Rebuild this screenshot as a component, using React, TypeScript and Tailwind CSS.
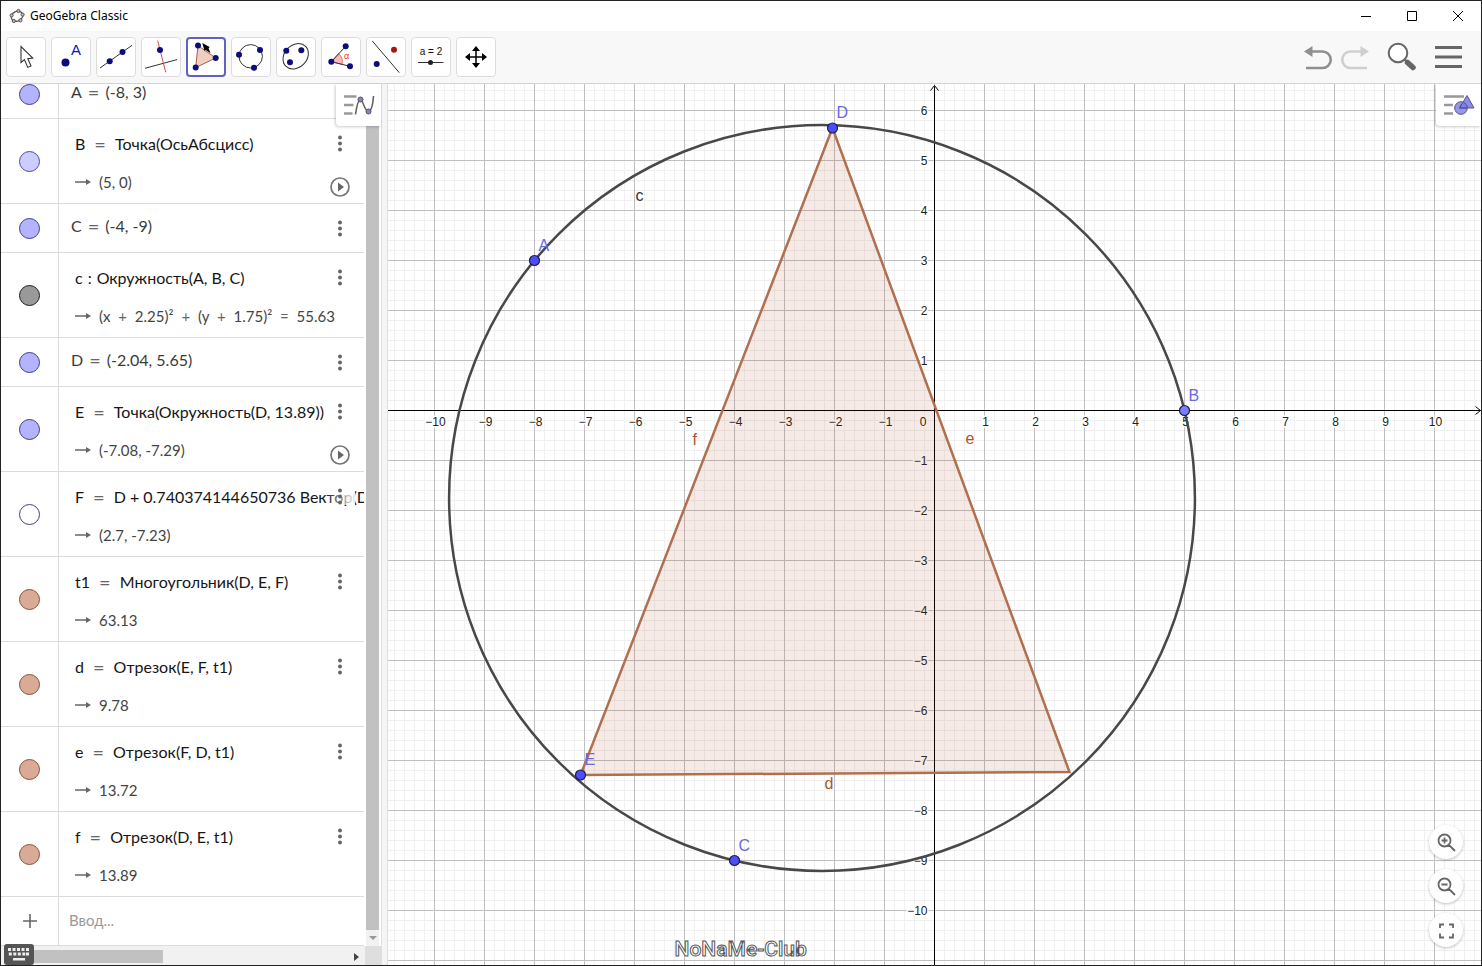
import { ReactNode } from 'react';

type Row = {
  name: string;
  sign?: string;
  value: string;
  result?: string;
  fill: string;
  stroke: string;
  play?: boolean;
};

const blue = { fill: '#b3b3ff', stroke: '#3d3d8f' };
const brown = { fill: '#d9ab97', stroke: '#8a5237' };

const rows: Row[] = [
  { name: 'A', value: '(-8, 3)', ...blue },
  { name: 'B', value: 'Точка(ОсьАбсцисс)', result: '(5, 0)', fill: '#ccccff', stroke: '#4c4ca0', play: true },
  { name: 'C', value: '(-4, -9)', ...blue },
  { name: 'c', sign: ':', value: 'Окружность(A, B, C)', result: '(x + 2.25)² + (y + 1.75)² = 55.63', fill: '#999999', stroke: '#1c1c1c' },
  { name: 'D', value: '(-2.04, 5.65)', ...blue },
  { name: 'E', value: 'Точка(Окружность(D, 13.89))', result: '(-7.08, -7.29)', ...blue, play: true },
  { name: 'F', value: 'D + 0.740374144650736 Вектор(D', result: '(2.7, -7.23)', fill: '#ffffff', stroke: '#3d3d8f' },
  { name: 't1', value: 'Многоугольник(D, E, F)', result: '63.13', ...brown },
  { name: 'd', value: 'Отрезок(E, F, t1)', result: '9.78', ...brown },
  { name: 'e', value: 'Отрезок(F, D, t1)', result: '13.72', ...brown },
  { name: 'f', value: 'Отрезок(D, E, t1)', result: '13.89', ...brown },
];

const Dot = ({ x, y, color = '#0c0c7c' }: { x: number; y: number; color?: string }) => (
  <circle cx={x} cy={y} r="3" fill={color} />
);

const tools: { label: string; icon: ReactNode }[] = [
  {
    label: 'Перемещать',
    icon: <path d="M15 9.5 15 25.5 18.4 22.6 21.8 30.4 25 29 21.8 21.6 26.8 21Z" fill="#fff" stroke="#333" strokeWidth="1.1" />,
  },
  {
    label: 'Точка',
    icon: (
      <>
        <circle cx="14.5" cy="25.5" r="4" fill="#0c0c7c" />
        <text x="20" y="18" fontSize="15" fill="#1515b0">A</text>
      </>
    ),
  },
  {
    label: 'Прямая',
    icon: (
      <>
        <path d="M4 31 36 8.3" stroke="#333" />
        <Dot x={13.7} y={24.3} />
        <Dot x={26.5} y={15} />
      </>
    ),
  },
  {
    label: 'Перпендикулярная прямая',
    icon: (
      <>
        <path d="M4 31.3 36 22.6" stroke="#333" />
        <path d="M16.7 3.6 24.7 35.3" stroke="#e04848" />
        <Dot x={19} y={13} />
      </>
    ),
  },
  {
    label: 'Многоугольник',
    icon: (
      <>
        <path d="M12 8.6 29.7 21 9.7 30.6Z" fill="#f0cfc2" stroke="#a3604a" />
        <path d="M16.3 6 23.6 10 22.6 11.6 24.6 16.2 19.4 12.8 18.6 14.2Z" fill="#000" />
        <Dot x={12} y={8.6} />
        <Dot x={29.7} y={21} />
        <Dot x={9.7} y={30.6} />
      </>
    ),
  },
  {
    label: 'Окружность по трём точкам',
    icon: (
      <>
        <circle cx="19.7" cy="19.3" r="11.7" fill="none" stroke="#333" />
        <Dot x={8} y={17.7} />
        <Dot x={29} y={13} />
        <Dot x={23} y={30.7} />
      </>
    ),
  },
  {
    label: 'Эллипс',
    icon: (
      <>
        <ellipse cx="19.7" cy="19.3" rx="14" ry="11.2" transform="rotate(-45 19.7 19.3)" fill="none" stroke="#333" />
        <Dot x={10.3} y={13.7} />
        <Dot x={25.3} y={13.3} />
        <Dot x={14} y={25.3} />
      </>
    ),
  },
  {
    label: 'Угол',
    icon: (
      <>
        <path d="M10.3 24.7 17.6 16.6A11 11 0 0 1 21 27.4Z" fill="#fbb8b8" stroke="#e87070" />
        <path d="M24.7 9.3 10.3 24.7 29 29.3" fill="none" stroke="#333" />
        <text x="23" y="22" fontSize="9" fill="#d33">α</text>
        <Dot x={10.3} y={24.7} />
        <Dot x={24.7} y={9.3} />
        <Dot x={29} y={29.3} />
      </>
    ),
  },
  {
    label: 'Отражение относительно прямой',
    icon: (
      <>
        <path d="M6.3 4 33.3 35.7" stroke="#333" />
        <Dot x={10.7} y={27} />
        <Dot x={28} y={12.7} color="#a01818" />
      </>
    ),
  },
  {
    label: 'Ползунок',
    icon: (
      <>
        <text x="20" y="18" fontSize="10" textAnchor="middle" fill="#111">a = 2</text>
        <path d="M7 25.5H32.5" stroke="#333" />
        <circle cx="19.5" cy="25.5" r="2.5" fill="#222" />
      </>
    ),
  },
  {
    label: 'Переместить чертёж',
    icon: (
      <>
        <path d="M20 12V28M12 20H28" stroke="#000" strokeWidth="1.5" />
        <path d="M20 9 24 14H16ZM20 31 16 26H24ZM9 20 14 16V24ZM31 20 26 24V16Z" fill="#000" />
      </>
    ),
  },
];

const TitleBar = () => (
  <div className="flex h-[30px] shrink-0 items-center justify-between bg-white">
    <div className="flex items-center gap-[5px] pl-2">
      <svg width="16" height="16" viewBox="0 0 16 16" fill="none" stroke="#555">
        <ellipse cx="8" cy="8.2" rx="6" ry="4.8" transform="rotate(-25 8 8.2)" strokeWidth="1.3" />
        <g fill="#bbb">
          <circle cx="9.4" cy="3" r="1.6" />
          <circle cx="13.6" cy="6.6" r="1.6" />
          <circle cx="11.4" cy="12.4" r="1.6" />
          <circle cx="4.8" cy="13" r="1.6" />
          <circle cx="2.6" cy="7.4" r="1.6" />
        </g>
      </svg>
      <h1 className="font-['Noto_Sans',sans-serif] text-[12px] leading-4 text-black">GeoGebra Classic</h1>
    </div>
    <div className="flex">
      <button aria-label="Свернуть" className="flex h-7 w-[46px] items-center justify-center">
        <svg width="10" height="10" viewBox="0 0 10 10"><path d="M0 5.5H10" stroke="#000" /></svg>
      </button>
      <button aria-label="Развернуть" className="flex h-7 w-[46px] items-center justify-center">
        <svg width="10" height="10" viewBox="0 0 10 10"><path d="M.5.5H9.5V9.5H.5Z" fill="none" stroke="#000" /></svg>
      </button>
      <button aria-label="Закрыть" className="flex h-7 w-[46px] items-center justify-center">
        <svg width="10" height="10" viewBox="0 0 10 10"><path d="M0 0 10 10M10 0 0 10" stroke="#000" /></svg>
      </button>
    </div>
  </div>
);

const Toolbar = () => (
  <div className="flex h-[53px] shrink-0 items-center justify-between border-b border-[#d4d4d4] bg-[#f8f8f8] pr-[18px] pl-[5px]">
    <div className="flex gap-[5px]">
      {tools.map((tool, i) => (
        <button
          key={tool.label}
          aria-label={tool.label}
          className={i === 4
            ? 'size-10 rounded-[4px] bg-white outline-2 -outline-offset-2 outline-[#6161c0]'
            : 'size-10 rounded-[4px] bg-white outline-1 -outline-offset-1 outline-[#dcdcdc]'}
        >
          <svg width="40" height="40" viewBox="0 0 40 40" className="font-['Liberation_Sans',sans-serif]">{tool.icon}</svg>
        </button>
      ))}
    </div>
    <div className="flex items-center">
      <button aria-label="Отменить" className="mr-[7px]">
        <svg width="30" height="30" viewBox="0 0 30 30">
          <path d="M7 9.5H19.5A8.2 8.2 0 0 1 19.5 26H3" fill="none" stroke="#8f8f8f" strokeWidth="2.6" />
          <path d="M1 9.5 9.5 4V15Z" fill="#8f8f8f" />
        </svg>
      </button>
      <button aria-label="Повторить" className="mr-4">
        <svg width="30" height="30" viewBox="0 0 30 30">
          <path d="M21 9.5H10.5A8.2 8.2 0 0 0 10.5 26H27" fill="none" stroke="#cfcfcf" strokeWidth="2.6" />
          <path d="M29 9.5 20.5 4V15Z" fill="#cfcfcf" />
        </svg>
      </button>
      <button aria-label="Поиск" className="mr-[17px]">
        <svg width="32" height="32" viewBox="0 0 32 32">
          <circle cx="12" cy="12" r="9.3" fill="#fff" stroke="#666" strokeWidth="2" />
          <path d="M18.5 18.5 21.5 21.5" stroke="#666" strokeWidth="2.4" />
          <path d="M21.5 21.5 27 26.5" stroke="#666" strokeWidth="5.5" strokeLinecap="round" />
        </svg>
      </button>
      <button aria-label="Меню">
        <svg width="28" height="28" viewBox="0 0 28 28"><path d="M0 4.5H27M0 14H27M0 23.5H27" stroke="#666" strokeWidth="3" /></svg>
      </button>
    </div>
  </div>
);

// operators get extra room on both sides, like in typeset formulas
const Formula = ({ text }: { text: string }) => (
  <span>
    {text.split(/([+=])/).map((part, i) =>
      i % 2 ? <span key={i} className="mx-1 text-[#666]">{part}</span> : part
    )}
  </span>
);

const AlgebraRow = ({ row }: { row: Row }) => {
  const single = !row.result;
  return (
    <li className={`flex shrink-0 border-b border-[#dcdcdc] ${single ? 'h-[49px]' : 'h-[85px]'}`}>
      <div className="flex w-[58px] shrink-0 items-center justify-center border-r border-[#dcdcdc]">
        <button
          aria-label={`Показать ${row.name}`}
          className="size-[21px] rounded-full border-[1.5px]"
          style={{ backgroundColor: row.fill, borderColor: row.stroke }}
        />
      </div>
      <div className={`relative min-w-0 flex-1 overflow-hidden whitespace-nowrap ${single ? 'pt-[10px] pl-3' : 'pt-[13px] pl-4'}`}>
        <p className={`flex h-6 items-center text-[16px] leading-4 ${single ? 'gap-[6px] text-[#3a3a3a]' : 'text-[#161616]'} ${!single && (row.sign ? 'gap-[5px]' : 'gap-[9px]')}`}>
          <span>{row.name}</span>
          <span className={row.sign ? '' : 'text-[20px] leading-4 text-[#666]'}>{row.sign ?? '='}</span>
          <span>{row.value}</span>
        </p>
        {row.result && (
          <p className="mt-[14px] flex h-6 items-center gap-2 text-[15px] text-[#444]">
            <svg width="16" height="8" viewBox="0 0 16 8">
              <path d="M0 4H13" stroke="#666" strokeWidth="1.5" />
              <path d="M11 1 16 4 11 7Z" fill="#666" />
            </svg>
            <Formula text={row.result} />
          </p>
        )}
        <div className="absolute top-0 right-[9px] flex w-[30px] justify-center bg-gradient-to-r from-white/0 to-white/90 pt-4">
          <button aria-label="Ещё">
            <svg width="6" height="17" viewBox="0 0 6 17" fill="#666">
              <circle cx="3" cy="2.5" r="2" />
              <circle cx="3" cy="8.5" r="2" />
              <circle cx="3" cy="14.5" r="2" />
            </svg>
          </button>
        </div>
        {row.play && (
          <button aria-label="Анимация" className="absolute right-[14px] bottom-[6px]">
            <svg width="20" height="20" viewBox="0 0 20 20">
              <circle cx="10" cy="10" r="9" fill="none" stroke="#757575" strokeWidth="1.7" />
              <path d="M8 5.5V14.5L14 10Z" fill="#666" />
            </svg>
          </button>
        )}
      </div>
    </li>
  );
};

const AlgebraView = () => (
  <aside className="relative flex w-[380px] shrink-0 flex-col bg-white font-['Lato','Noto_Sans',sans-serif]">
    <div className="flex min-h-0 flex-1">
      <ul className="flex w-[363px] flex-col justify-end overflow-hidden">
        {rows.map((row) => <AlgebraRow key={row.name} row={row} />)}
        <li className="flex h-[49px] shrink-0 border-b border-[#dcdcdc]">
          <div className="flex w-[58px] shrink-0 items-center justify-center border-r border-[#dcdcdc]">
            <button aria-label="Добавить">
              <svg width="14" height="14" viewBox="0 0 14 14"><path d="M7 0V14M0 7H14" stroke="#666" strokeWidth="1.6" /></svg>
            </button>
          </div>
          <input aria-label="Ввод" placeholder="Ввод..." className="min-w-0 flex-1 px-[10px] pb-[2px] text-[15px] outline-none placeholder:text-[#999]" />
        </li>
      </ul>
      <div className="ml-[2px] flex w-[13px] flex-col">
        <div className="flex-1 bg-[#c1c1c1]" />
        <div className="flex h-4 items-center justify-center bg-[#f1f1f1]">
          <svg width="8" height="4" viewBox="0 0 8 4"><path d="M0 0H8L4 4Z" fill="#999" /></svg>
        </div>
      </div>
    </div>
    <div className="flex h-[19px] shrink-0 items-center bg-[#f1f1f1]">
      <button aria-label="Клавиатура" className="z-10 -mt-[3px] ml-[3px] flex h-[21px] w-[30px] items-center justify-center rounded-[3px] bg-[#555]">
        <svg width="24" height="15" viewBox="0 0 24 15" fill="#eee">
          {[1, 5.5, 10, 14.5, 19].map((x) => (
            <g key={x}>
              <rect x={x} y="1" width="3" height="3" />
              <rect x={x + (x < 15 ? 0.8 : 0)} y="5.5" width="3" height="3" />
            </g>
          ))}
          <rect x="6" y="11" width="12" height="2.5" />
        </svg>
      </button>
      <div className="mt-[2px] h-[13px] w-[129px] bg-[#c1c1c1]" />
      <svg width="5" height="8" viewBox="0 0 5 8" className="mt-[2px] mr-[6px] ml-auto"><path d="M0 0V8L5 4Z" fill="#444" /></svg>
      <div className="h-full w-4 bg-[#dedede]" />
    </div>
    <button aria-label="Настройки алгебры" className="absolute top-0 right-0 flex h-[42px] w-[45px] items-center justify-center rounded-bl-[4px] bg-white shadow-[-1px_1px_3px_rgba(0,0,0,0.2)]">
      <svg width="32" height="24" viewBox="0 0 32 24">
        <path d="M1 3.5H13.5M1 12H10.5M1 20.5H9.5" stroke="#999" strokeWidth="2.4" />
        <path d="M12.5 21.5C13.5 14 15 7 17.5 6.5C20 7 21.5 18 25.5 18.5C28.5 18 30 10 30.5 3" fill="none" stroke="#666" strokeWidth="1.6" />
        <circle cx="17.5" cy="6.5" r="2.5" fill="#8080d8" stroke="#555" />
        <circle cx="25.5" cy="18.5" r="2.5" fill="#8080d8" stroke="#555" />
      </svg>
    </button>
  </aside>
);

// world units to pixels, measured from the origin
const UNIT = 50;
const px = (v: number) => v * UNIT;
const range = (from: number, to: number) => Array.from({ length: to - from + 1 }, (_, i) => from + i);
const format = (n: number) => (n < 0 ? `−${-n}` : `${n}`);

const points = [
  { name: 'A', x: -8, y: 3, fill: '#4d4dff' },
  { name: 'B', x: 5, y: 0, fill: '#7d7dff' },
  { name: 'C', x: -4, y: -9, fill: '#4d4dff' },
  { name: 'D', x: -2.04, y: 5.65, fill: '#4d4dff' },
  { name: 'E', x: -7.08, y: -7.29, fill: '#4d4dff' },
];

const Plot = () => (
  <svg className="block size-full font-['Liberation_Sans',sans-serif]">
    <g transform="translate(546.5 326.5)">
      <g stroke="#f0f0f0">
        {range(-56, 56).map((n) => (
          <g key={n}>
            <path d={`M${n * 10} -340V570`} />
            <path d={`M-560 ${n * 10}H560`} />
          </g>
        ))}
      </g>
      <g stroke="#c0c0c0">
        {range(-11, 11).map((n) => (
          <g key={n}>
            <path d={`M${px(n)} -340V570`} />
            <path d={`M-560 ${px(n)}H560`} />
          </g>
        ))}
      </g>
      <g stroke="#000" fill="none">
        <path d="M0 -324V570M-560 0H546" />
        <path d="M-4 -320 0 -325 4 -320M541 -4 546 0 541 4" />
      </g>
      <g fontSize="12" fill="#222" stroke="#fff" strokeWidth="3" paintOrder="stroke">
        {range(-10, 10).filter((n) => n !== 0).map((n) => (
          <text key={n} x={px(n) + 1} y="15" textAnchor="middle">{format(n)}</text>
        ))}
        {range(-10, 6).filter((n) => n !== 0).map((n) => (
          <text key={n} x="-7" y={px(-n) + 4} textAnchor="end">{format(n)}</text>
        ))}
        <text x="-8" y="15" textAnchor="end">0</text>
      </g>
      <path
        d={`M${px(-2.04)} ${px(-5.65)} ${px(-7.08)} ${px(7.29)} ${px(2.7)} ${px(7.23)}Z`}
        fill="#993300"
        fillOpacity="0.1"
        stroke="#b0704f"
        strokeWidth="2.5"
      />
      <circle cx={px(-2.25)} cy={px(1.75)} r={px(7.4585)} fill="none" stroke="#484848" strokeWidth="2.5" />
      {points.map((p) => (
        <g key={p.name}>
          <circle cx={px(p.x)} cy={px(-p.y)} r="5" fill={p.fill} stroke="#1c1c50" strokeWidth="1.2" />
          <text x={px(p.x) + 4} y={px(-p.y) - 10} fontSize="16" fill="#6a6ae0">{p.name}</text>
        </g>
      ))}
      <g fontSize="16" fill="#a85535">
        <text x="-242" y="34">f</text>
        <text x="31" y="33">e</text>
        <text x="-110" y="378">d</text>
        <text x="-299" y="-210" fill="#333">c</text>
      </g>
      <text x="-260" y="545" fontSize="21" fontWeight="500" fill="#fff" stroke="#555" className="font-['Roboto',sans-serif]">NoNaMe-Club</text>
    </g>
  </svg>
);

const zoomButtons = [
  { label: 'Увеличить', icon: <path d="M7.5 1.5A6 6 0 1 0 7.5 13.5A6 6 0 1 0 7.5 1.5M12 12 18 18M4.5 7.5H10.5M7.5 4.5V10.5" /> },
  { label: 'Уменьшить', icon: <path d="M7.5 1.5A6 6 0 1 0 7.5 13.5A6 6 0 1 0 7.5 1.5M12 12 18 18M4.5 7.5H10.5" /> },
  { label: 'Полный экран', icon: <path d="M3 7V3.5H7M12 3.5H16V7M16 12.5V16.5H12M7 16.5H3V12.5" /> },
];

const GraphicsView = () => (
  <main className="relative min-w-0 flex-1 overflow-hidden bg-white">
    <Plot />
    <button aria-label="Настройки полотна" className="absolute top-0 right-0 flex h-[42px] w-[45px] items-center justify-center rounded-bl-[4px] bg-white shadow-[-1px_1px_3px_rgba(0,0,0,0.2)]">
      <svg width="32" height="24" viewBox="0 0 32 24">
        <path d="M1 3.5H21M1 12H10M1 20.5H10" stroke="#999" strokeWidth="2.4" />
        <path d="M24 2.5 31 15H16.5Z" fill="#8c8ce8" stroke="#55558f" />
        <circle cx="18" cy="15" r="6.3" fill="#7c7ce8" fillOpacity="0.8" stroke="#555577" />
        <path d="M19 10.5 16.5 15H24" fill="none" stroke="#444477" />
      </svg>
    </button>
    <div className="absolute right-[18px] bottom-[18px] flex flex-col gap-[10px]">
      {zoomButtons.map((b) => (
        <button key={b.label} aria-label={b.label} className="flex size-[34px] items-center justify-center rounded-full bg-white shadow-[0_1px_3px_rgba(0,0,0,0.25)]">
          <svg width="19" height="19" viewBox="0 0 19 19" fill="none" stroke="#666" strokeWidth="1.8">{b.icon}</svg>
        </button>
      ))}
    </div>
  </main>
);

export default function App() {
  return (
    <div className="flex h-screen flex-col overflow-hidden border border-[#222] bg-white">
      <TitleBar />
      <Toolbar />
      <div className="flex min-h-0 flex-1">
        <AlgebraView />
        <div className="w-[7px] shrink-0 border-x border-[#e0e0e0] bg-[#f5f5f5]" />
        <GraphicsView />
      </div>
    </div>
  );
}
